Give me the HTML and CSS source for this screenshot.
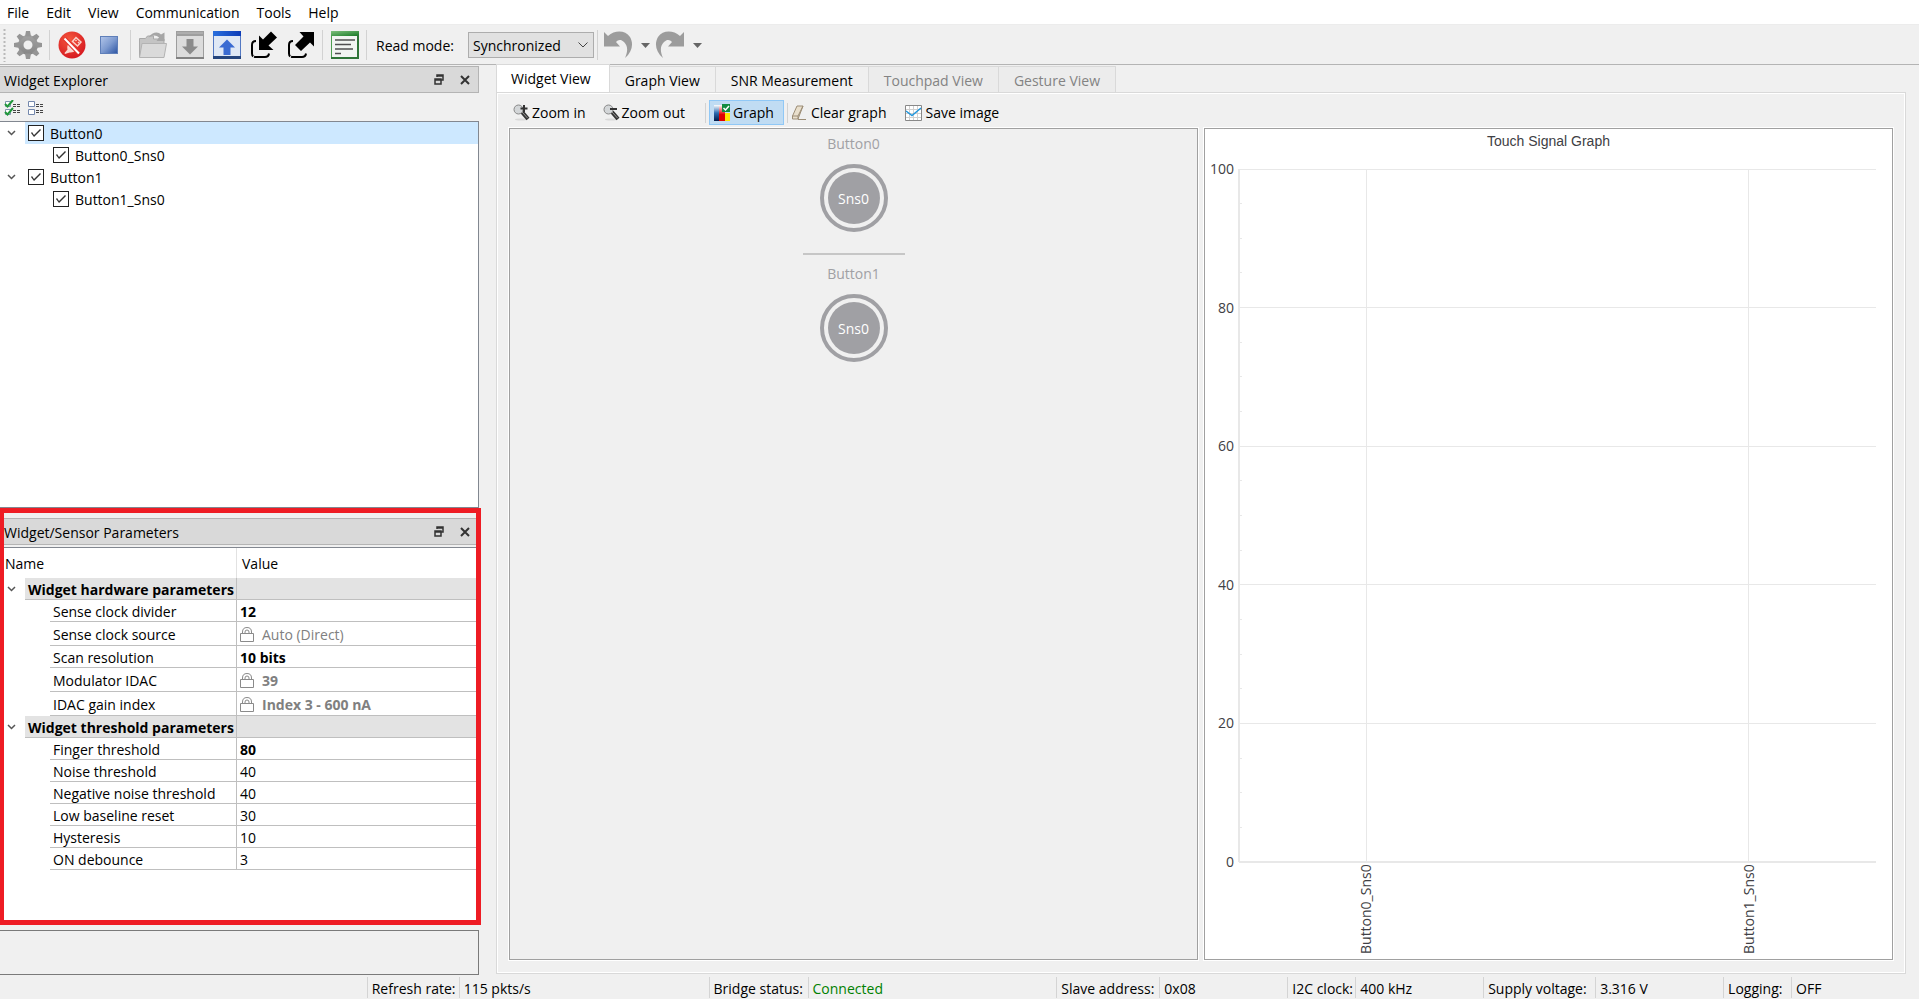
FILE: index.html
```html
<!DOCTYPE html>
<html lang="en">
<head>
<meta charset="utf-8">
<title>Tuner</title>
<link rel="stylesheet" href="styles.css">
</head>
<body>
<nav class="menubar">
  <button>File</button><button>Edit</button><button>View</button><button>Communication</button><button>Tools</button><button>Help</button>
</nav>

<div class="toolbar">
  <svg class="grip" width="3" height="34" viewBox="0 0 3 34"><path d="M1.5 1v33" stroke="#b9b9b9" stroke-width="2" stroke-dasharray="2 2"/></svg>
  <button class="tool" aria-label="Settings"><svg width="30" height="30" viewBox="0 0 30 30"><defs><linearGradient id="gear" x1="0" y1="0" x2="0" y2="1"><stop offset="0" stop-color="#a3a3a3"/><stop offset="1" stop-color="#858585"/></linearGradient></defs><g fill="url(#gear)"><path fill-rule="evenodd" d="M15 5a10 10 0 1 0 0 20a10 10 0 1 0 0-20zM15 10.500a4.500 4.500 0 1 1 0 9a4.500 4.500 0 1 1 0-9z"/></g><g fill="#959595"><path id="tooth" d="M12 6.500L13 1h4l1 5.500z"/><use href="#tooth" transform="rotate(45 15 15)"/><use href="#tooth" transform="rotate(90 15 15)"/><use href="#tooth" transform="rotate(135 15 15)"/><use href="#tooth" transform="rotate(180 15 15)"/><use href="#tooth" transform="rotate(225 15 15)"/><use href="#tooth" transform="rotate(270 15 15)"/><use href="#tooth" transform="rotate(315 15 15)"/></g></svg></button>
  <span class="sep"></span>
  <button class="tool" aria-label="Disconnect"><svg width="28" height="28" viewBox="0 0 28 28"><defs><radialGradient id="red" cx=".4" cy=".3" r=".8"><stop offset="0" stop-color="#f4573c"/><stop offset="1" stop-color="#d3121d"/></radialGradient></defs><circle cx="14" cy="14" r="13.500" fill="url(#red)"/><g fill="none" stroke="#fbd0c8" stroke-width="1.500"><path d="M14.500 10.500l3.500-4 5 4.500-3.500 4z"/><path d="M17.500 9l1 1M20 11l1 1"/></g><path d="M11 12l7 7q-3 3-6.500 2.500L7 23l-.5-1 3-3.500Q8.500 15 11 12z" fill="#fbd6ce"/><path d="M6.500 7.500L21 22.500" stroke="#e2302a" stroke-width="4"/><path d="M6.500 7.500L21 22.500" stroke="#fff" stroke-width="2"/></svg></button>
  <button class="tool" aria-label="Stop"><svg width="18" height="18" viewBox="0 0 18 18"><defs><linearGradient id="stop" x1="0" y1="0" x2="1" y2="1"><stop offset="0" stop-color="#b3c6ea"/><stop offset=".5" stop-color="#7e9bd0"/><stop offset="1" stop-color="#2c54a3"/></linearGradient></defs><rect x=".5" y=".5" width="17" height="17" fill="url(#stop)" stroke="#5f7fb9"/></svg></button>
  <span class="sep"></span>
  <button class="tool" aria-label="Open"><svg width="30" height="28" viewBox="0 0 30 28"><path d="M1.500 26V7.500h6l2-2.500h6v3h10.500v5" fill="#c4c4c4" stroke="#a9a9a9"/><path d="M1.500 26.500L4 12.500h24.500L26 26.500z" fill="#dadada" stroke="#b3b3b3"/><path d="M10.500 6.500C14 1 20 0 23 3.500l3.500-2V10h-8L21 6.500q-4-4-10.500 0z" fill="#a6a6a6"/></svg></button>
  <button class="tool" aria-label="Import"><svg width="28" height="28" viewBox="0 0 28 28"><rect x=".5" y=".5" width="27" height="27" fill="#dcdcdc" stroke="#9d9d9d"/><path d="M0 0h28v5H0z" fill="#9e9e9e"/><path d="M1 2h26" stroke="#bdbdbd"/><path d="M0 27h28" stroke="#828282" stroke-width="2"/><path d="M10.500 8h7v7.500H22l-8 8-8-8h4.500z" fill="#8b8b8b"/></svg></button>
  <button class="tool" aria-label="Export"><svg width="28" height="28" viewBox="0 0 28 28"><defs><linearGradient id="blue" x1="0" x2="1"><stop offset="0" stop-color="#2b70dd"/><stop offset="1" stop-color="#0b3bb8"/></linearGradient></defs><rect x=".5" y=".5" width="27" height="27" fill="#dfe8f5" stroke="#5378c2"/><path d="M0 0h28v5H0z" fill="url(#blue)"/><path d="M0 26.500h28" stroke="#25457d" stroke-width="3"/><path d="M10.500 24v-7.500H6l8-8 8 8h-4.500V24z" fill="#3a6bd2"/></svg></button>
  <button class="tool" aria-label="Read from device"><svg width="28" height="28" viewBox="0 0 28 28"><path d="M6 10Q2 10 2 14v8.500Q2 26 6 26h9q3.500 0 4-3.500" fill="none" stroke="#000" stroke-width="2" stroke-dasharray="18 1 20 1"/><path d="M21 .5L27 6.500 18.500 14.500l5 4.500H9V4.500l4 4z"/></svg></button>
  <button class="tool" aria-label="Write to device"><svg width="28" height="28" viewBox="0 0 28 28"><path d="M6 10Q2 10 2 14v8.500Q2 26 6 26h9q3.500 0 4-3.500" fill="none" stroke="#000" stroke-width="2" stroke-dasharray="18 1 20 1"/><path d="M12.500 1H27v14.500l-4-4-9 8.500-6-6 8.500-8.500z"/></svg></button>
  <span class="sep"></span>
  <button class="tool" aria-label="Log"><svg width="28" height="28" viewBox="0 0 28 28"><defs><linearGradient id="green" x1="0" x2="1" y2="1"><stop offset="0" stop-color="#7ec07c"/><stop offset="1" stop-color="#177a25"/></linearGradient></defs><rect x=".5" y=".5" width="27" height="27" fill="#f2f5f2" stroke="#4e9d50"/><path d="M0 0h28v5H0z" fill="url(#green)"/><path d="M27 4v23H0" fill="none" stroke="#2f7538" stroke-width="2"/><path d="M4 9h20M4 13.500h16M4 18h18M4 22.500h6" stroke="#505050" stroke-width="1.500"/></svg></button>
  <span class="sep"></span>
  <label class="mode-label" for="mode">Read mode:</label>
  <div class="combo"><select id="mode"><option>Synchronized</option></select><svg width="10" height="6" viewBox="0 0 10 6"><path d="M.5.500L5 5 9.500.500" fill="none" stroke="#444"/></svg></div>
  <span class="sep"></span>
  <button class="tool arrow" aria-label="Undo"><svg width="30" height="28" viewBox="0 0 30 28"><path id="bend" d="M1 1l4 4C12-1 22-1 27 6c4 7 2 15-5 21 3-7 3-12-1-16-3-3-6-2.500-8 0l4 4.500H1z" fill="#9c9c9c"/></svg><svg width="9" height="5" viewBox="0 0 9 5"><path d="M0 0h9L4.500 5z" fill="#666"/></svg></button>
  <button class="tool arrow" aria-label="Redo"><svg width="30" height="28" viewBox="0 0 30 28"><use href="#bend" transform="matrix(-1 0 0 1 30 0)"/></svg><svg width="9" height="5" viewBox="0 0 9 5"><path d="M0 0h9L4.500 5z" fill="#666"/></svg></button>
</div>

<main class="workspace">
  <aside class="dock">
    <section class="explorer">
      <header class="dock-title"><h2>Widget Explorer</h2>
        <button aria-label="Float"><svg width="10" height="11" viewBox="0 0 10 11"><path d="M3 3V1h6v5H7M3 2h6M1 5h6v5H1zM1 6h6" fill="none" stroke="#333" stroke-width="1.500"/></svg></button>
        <button aria-label="Close"><svg width="10" height="10" viewBox="0 0 10 10"><path d="M1 1l8 8M9 1L1 9" stroke="#333" stroke-width="2"/></svg></button>
      </header>
      <div class="tree-tools">
        <button aria-label="Check all"><svg width="16" height="16" viewBox="0 0 16 16"><g fill="#fff" stroke="#8093ae"><path d="M1.500 1.500h5v5h-5zM1.500 9.500h5v5h-5z"/></g><path d="M9 4.500h3m1 0h3M9 6.500h3m1 0h3M9 12.500h3m1 0h3M9 10.500h3m1 0h3" stroke="#444"/><path d="M1 4l2.500 2.500L9 0M1 12l2.500 2.500L9 8" fill="none" stroke="#21983b" stroke-width="2"/></svg></button>
        <button aria-label="Uncheck all"><svg width="16" height="16" viewBox="0 0 16 16"><g fill="#fff" stroke="#7488ad"><path d="M.5 1.500h6v5h-6zM.5 9.500h6v5h-6z"/></g><path d="M8 4.500h3m1 0h3M8 6.500h3m1 0h3M8 12.500h3m1 0h3M8 10.500h3m1 0h3" stroke="#444"/></svg></button>
      </div>
      <ul class="tree">
        <li><div class="node"><svg class="chev" width="9" height="6" viewBox="0 0 9 6"><path d="M1 1l3.500 3.500L8 1" fill="none" stroke="#555" stroke-width="1.500"/></svg><label class="selected"><input type="checkbox" checked>Button0</label></div>
          <ul><li><label><input type="checkbox" checked>Button0_Sns0</label></li></ul></li>
        <li><div class="node"><svg class="chev" width="9" height="6" viewBox="0 0 9 6"><path d="M1 1l3.500 3.500L8 1" fill="none" stroke="#555" stroke-width="1.500"/></svg><label><input type="checkbox" checked>Button1</label></div>
          <ul><li><label><input type="checkbox" checked>Button1_Sns0</label></li></ul></li>
      </ul>
    </section>

    <section class="params">
      <header class="dock-title"><h2>Widget/Sensor Parameters</h2>
        <button aria-label="Float"><svg width="10" height="11" viewBox="0 0 10 11"><path d="M3 3V1h6v5H7M3 2h6M1 5h6v5H1zM1 6h6" fill="none" stroke="#333" stroke-width="1.500"/></svg></button>
        <button aria-label="Close"><svg width="10" height="10" viewBox="0 0 10 10"><path d="M1 1l8 8M9 1L1 9" stroke="#333" stroke-width="2"/></svg></button>
      </header>
      <div class="sheet">
      <table>
        <colgroup><col class="c-exp"><col class="c-exp"><col class="c-name"><col></colgroup>
        <thead><tr><th colspan="3">Name</th><th>Value</th></tr></thead>
        <tbody>
        <tr class="group"><td class="exp"><svg class="chev" width="9" height="6" viewBox="0 0 9 6"><path d="M1 1l3.500 3.500L8 1" fill="none" stroke="#555" stroke-width="1.500"/></svg></td><th colspan="2">Widget hardware parameters</th><td></td></tr>
        <tr><td colspan="2" class="blank"></td><td>Sense clock divider</td><td class="set">12</td></tr>
        <tr class="tall"><td colspan="2" class="blank"></td><td>Sense clock source</td><td class="locked"><svg width="14" height="15" viewBox="0 0 14 15"><path d="M2.500 6V5Q2.500.500 7 .500t4.500 4.500v1M5 6V5Q5 3 7 3t2 2v1M.5 6.500h13v8H.5z" fill="none" stroke="#8a8a8a"/></svg>Auto (Direct)</td></tr>
        <tr><td colspan="2" class="blank"></td><td>Scan resolution</td><td class="set">10 bits</td></tr>
        <tr class="tall"><td colspan="2" class="blank"></td><td>Modulator IDAC</td><td class="locked set"><svg width="14" height="15" viewBox="0 0 14 15"><path d="M2.500 6V5Q2.500.500 7 .500t4.500 4.500v1M5 6V5Q5 3 7 3t2 2v1M.5 6.500h13v8H.5z" fill="none" stroke="#8a8a8a"/></svg>39</td></tr>
        <tr class="tall"><td colspan="2" class="blank"></td><td>IDAC gain index</td><td class="locked set"><svg width="14" height="15" viewBox="0 0 14 15"><path d="M2.500 6V5Q2.500.500 7 .500t4.500 4.500v1M5 6V5Q5 3 7 3t2 2v1M.5 6.500h13v8H.5z" fill="none" stroke="#8a8a8a"/></svg>Index 3 - 600 nA</td></tr>
        </tbody>
        <tbody>
        <tr class="group"><td class="exp"><svg class="chev" width="9" height="6" viewBox="0 0 9 6"><path d="M1 1l3.500 3.500L8 1" fill="none" stroke="#555" stroke-width="1.500"/></svg></td><th colspan="2">Widget threshold parameters</th><td></td></tr>
        <tr><td colspan="2" class="blank"></td><td>Finger threshold</td><td class="set">80</td></tr>
        <tr><td colspan="2" class="blank"></td><td>Noise threshold</td><td>40</td></tr>
        <tr><td colspan="2" class="blank"></td><td>Negative noise threshold</td><td>40</td></tr>
        <tr><td colspan="2" class="blank"></td><td>Low baseline reset</td><td>30</td></tr>
        <tr><td colspan="2" class="blank"></td><td>Hysteresis</td><td>10</td></tr>
        <tr><td colspan="2" class="blank"></td><td>ON debounce</td><td>3</td></tr>
        </tbody>
      </table>
      </div>
    </section>
    <div class="description"></div>
  </aside>

  <section class="views">
    <div class="tabs" role="tablist">
      <button role="tab" class="active">Widget View</button><button role="tab">Graph View</button><button role="tab">SNR Measurement</button><button role="tab" disabled>Touchpad View</button><button role="tab" disabled>Gesture View</button>
    </div>
    <div class="pane">
      <div class="view-tools">
        <button><svg width="17" height="17" viewBox="0 0 17 17"><ellipse cx="8" cy="15.500" rx="6" ry="1" fill="#d8d8d8"/><path d="M9 8l6 7" stroke="#333" stroke-width="4"/><path d="M9 8l5.500 6" stroke="#999"/><circle cx="5.500" cy="5.500" r="4.500" fill="#d3d6d8" stroke="#888"/><path d="M11 1v7M7.500 4.500h7" stroke="#333" stroke-width="2"/></svg>Zoom in</button>
        <button><svg width="17" height="17" viewBox="0 0 17 17"><ellipse cx="8" cy="15.500" rx="6" ry="1" fill="#d8d8d8"/><path d="M9 8l6 7" stroke="#333" stroke-width="4"/><path d="M9 8l5.500 6" stroke="#999"/><circle cx="5.500" cy="5.500" r="4.500" fill="#d3d6d8" stroke="#888"/><path d="M7 5h7" stroke="#333" stroke-width="2"/></svg>Zoom out</button>
        <span class="sep"></span>
        <button class="pressed"><svg width="17" height="17" viewBox="0 0 17 17"><defs><linearGradient id="b1" x1="0" y1="0" x2="0" y2="1"><stop offset="0" stop-color="#fff"/><stop offset=".5" stop-color="#2d6bb0"/><stop offset="1" stop-color="#001b48"/></linearGradient><linearGradient id="b2" x1="0" y1="0" x2="0" y2="1"><stop offset="0" stop-color="#fff"/><stop offset=".6" stop-color="#e00000"/></linearGradient></defs><path d="M0 1h5v16H0z" fill="url(#b1)"/><path d="M5 1h6v16H5z" fill="url(#b2)"/><path d="M11 9h5v8h-5z" fill="#ffe600"/><path d="M8 0h8v8H8z" fill="#118c40"/><path d="M9.500 4l2 2L15 2" fill="none" stroke="#fff" stroke-width="1.500"/></svg>Graph</button>
        <span class="sep"></span>
        <button><svg width="17" height="16" viewBox="0 0 17 16"><path d="M6 1h6L7 14H1.500v-3z" fill="#e9dfcc" stroke="#9c8d76"/><path d="M1.500 11H7l5-10M7 14.500h8M7 11v3" fill="none" stroke="#9c8d76"/></svg>Clear graph</button>
        <button><svg width="17" height="16" viewBox="0 0 17 16"><path d="M.5.500h16v15H.500z" fill="#fff" stroke="#888"/><path d="M4.500 1v14M8.500 1v14M12.500 1v14M1 4.500h15M1 8.500h15M1 12.500h15" stroke="#d0d0d0"/><path d="M1 6l6 4.500L16 3" fill="none" stroke="#2196dc" stroke-width="1.500"/></svg>Save image</button>
      </div>
      <div class="split">
        <div class="canvas">
          <figure class="widget"><figcaption>Button0</figcaption><div class="sensor"><span>Sns0</span></div></figure>
          <hr>
          <figure class="widget"><figcaption>Button1</figcaption><div class="sensor"><span>Sns0</span></div></figure>
        </div>
        <div class="chart">
          <h3>Touch Signal Graph</h3>
          <div class="y-axis"><span>100</span><span>80</span><span>60</span><span>40</span><span>20</span><span>0</span></div>
          <svg class="plot"><g stroke="#e8e8e8" shape-rendering="crispEdges"><line x1="0" x2="100%" y1="0" y2="0"/><line x1="0" x2="100%" y1="20%" y2="20%"/><line x1="0" x2="100%" y1="40%" y2="40%"/><line x1="0" x2="100%" y1="60%" y2="60%"/><line x1="0" x2="100%" y1="80%" y2="80%"/><line x1="20%" x2="20%" y1="0" y2="100%"/><line x1="80%" x2="80%" y1="0" y2="100%"/><line x1="0" x2="3" y1="5%" y2="5%"/><line x1="0" x2="3" y1="10%" y2="10%"/><line x1="0" x2="3" y1="15%" y2="15%"/><line x1="0" x2="3" y1="25%" y2="25%"/><line x1="0" x2="3" y1="30%" y2="30%"/><line x1="0" x2="3" y1="35%" y2="35%"/><line x1="0" x2="3" y1="45%" y2="45%"/><line x1="0" x2="3" y1="50%" y2="50%"/><line x1="0" x2="3" y1="55%" y2="55%"/><line x1="0" x2="3" y1="65%" y2="65%"/><line x1="0" x2="3" y1="70%" y2="70%"/><line x1="0" x2="3" y1="75%" y2="75%"/><line x1="0" x2="3" y1="85%" y2="85%"/><line x1="0" x2="3" y1="90%" y2="90%"/><line x1="0" x2="3" y1="95%" y2="95%"/><line x1="0" x2="0" y1="0" y2="100%" stroke-width="2"/><line x1="0" x2="100%" y1="100%" y2="100%" stroke-width="2"/></g></svg>
          <div class="x-axis"><span>Button0_Sns0</span><span>Button1_Sns0</span></div>
        </div>
      </div>
    </div>
  </section>
</main>

<footer class="status">
  <span class="spacer"></span>
  <span>Refresh rate:</span><span>115 pkts/s</span>
  <span>Bridge status:</span><span class="ok">Connected</span>
  <span>Slave address:</span><span>0x08</span>
  <span>I2C clock:</span><span>400 kHz</span>
  <span>Supply voltage:</span><span>3.316 V</span>
  <span>Logging:</span><span>OFF</span>
</footer>
</body>
</html>
```
FILE: styles.css
```css
* { box-sizing: border-box; }
body {
  margin: 0;
  height: 100vh;
  display: flex;
  flex-direction: column;
  background: #f0f0f0;
  color: #000;
  font: 14px/20px "Open Sans", sans-serif;
  overflow: hidden;
}
button, select { font: inherit; color: inherit; background: none; border: 0; padding: 0; margin: 0; }
svg { flex: none; }
h2, h3, ul, figure { margin: 0; padding: 0; font: inherit; list-style: none; }

.menubar { display: flex; flex: none; gap: 17px; height: 25px; padding: 2px 7px 0; background: #fff; border-bottom: 1px solid #ececec; }

.toolbar { display: flex; flex: none; align-items: center; height: 40px; padding: 1px 3px 0; border-bottom: 1px solid #b4b4b4; }
.tool { display: flex; align-items: center; justify-content: center; width: 37px; height: 34px; }
.tool.arrow { width: 52px; gap: 8px; }
.grip { margin-right: 3px; }
.sep { flex: none; width: 1px; height: 30px; margin: 0 3px; background: #d2d2d2; }
.mode-label { margin: 0 14px 0 6px; padding-top: 1px; }
.combo { position: relative; height: 26px; width: 126px; }
.combo select { width: 100%; height: 100%; padding: 1px 4px 0; appearance: none; background: #e1e1e1; border: 1px solid #adadad; border-radius: 0; }
.combo svg { position: absolute; right: 6px; top: 10px; }

.workspace { display: flex; flex: 1; min-height: 0; gap: 17px; padding-right: 13px; }
.dock { display: flex; flex-direction: column; flex: none; width: 479px; padding-top: 1px; }
.explorer { display: flex; flex-direction: column; flex: 1; min-height: 0; }
.dock-title { display: flex; flex: none; align-items: center; gap: 16px; height: 27px; padding: 0 8px 0 4px; background: #d9d9d9; border: 1px solid #b4b4b4; border-left: 0; }
.dock-title h2 { flex: 1; padding-top: 2px; }
.dock-title button { display: flex; }
.tree-tools { display: flex; align-items: center; gap: 8px; height: 28px; padding-left: 4px; padding-top: 2px; }
.tree-tools button { display: flex; }
.tree { flex: 1; background: #fff; border: 1px solid #828790; border-left: 0; }
.node { display: flex; align-items: center; }
.chev { display: block; margin-left: 7px; margin-right: 9px; }
.tree label { display: flex; flex: 1; align-items: flex-end; gap: 6px; height: 22px; padding-left: 3px; }
.tree ul { padding-left: 50px; }
.tree .selected { background: #cde8ff; }
.tree input { appearance: none; width: 16px; height: 16px; margin: 0 0 3px; border: 1px solid #222; background: #fff; }
.tree input:checked::after { content: ""; display: block; width: 14px; height: 14px; background: #333; clip-path: polygon(2px 7px, 3px 6px, 5px 9px, 11px 3px, 12px 4px, 5px 11px); }

.params { position: relative; flex: none; padding-top: 10px; }
.params::after { content: ""; position: absolute; inset: 0 -2px 0 0; border: 5px solid #ee1c24; border-left-width: 4px; pointer-events: none; }
.sheet { margin-top: 2px; padding-bottom: 55px; background: #fff; border-top: 1px solid #828790; }
table { width: 100%; border-collapse: separate; border-spacing: 0; table-layout: fixed; }
.c-exp { width: 25px; }
.c-name { width: 187px; }
th { text-align: left; }
thead th { height: 30px; padding: 2px 5px 0; font-weight: 400; }
thead th:first-child { border-right: 1px solid #e2e2e2; }
tbody td, tbody th { height: 22px; padding: 3px 3px 0; line-height: 18px; border-bottom: 1px solid #bfbfbf; white-space: nowrap; }
tbody td:nth-last-child(2), tbody th { border-right: 1px solid #bfbfbf; }
.tall td { height: 24px; }
tbody .blank, tbody .exp { padding: 0; border: 0; }
.group th, .group td:last-child { background: #e3e3e3; }
.set { font-weight: 700; }
.locked { color: #808080; }
.locked svg { margin-right: 8px; vertical-align: -2px; }
.description { flex: none; height: 45px; margin: 5px 0 1px; border: 1px solid #7a7a7a; border-left: 0; }

.views { display: flex; flex-direction: column; flex: 1; min-width: 0; padding-bottom: 2px; }
.tabs { display: flex; align-items: flex-end; height: 27px; }
.tabs button { height: 26px; padding: 2px 15px 0; background: #f0f0f0; border: 1px solid #d9d9d9; border-left: 0; border-bottom: 0; }
.tabs button.active { height: 28px; padding: 1px 18px 0 14px; background: #fff; border-left: 1px solid #d9d9d9; }
.tabs button:disabled { color: #838383; background: #ececec; }
.pane { display: flex; flex-direction: column; flex: 1; min-height: 0; padding: 0 12px 13px; border: 1px solid #d9d9d9; box-shadow: inset 0 0 0 1px #fff; }
.view-tools { display: flex; flex: none; align-items: center; height: 35px; padding: 4px 4px 0; }
.view-tools button { display: flex; align-items: center; gap: 2px; height: 25px; margin-right: 17px; }
.view-tools .sep { height: 20px; }
.view-tools .pressed { padding: 0 9px 0 4px; margin: 0; background: #c0dcf3; border: 1px solid #90c8f6; }
.view-tools .pressed ~ button:not(.pressed) { gap: 3px; margin-right: 19px; }
.split { display: grid; grid-template-columns: minmax(0, 1fr) minmax(0, 1fr); flex: 1; gap: 6px; min-height: 0; }
.canvas, .chart { border: 1px solid #a0a0a0; outline: 1px solid #fff; }
.canvas { display: flex; flex-direction: column; align-items: center; padding-top: 5px; color: #a0a0a4; }
.canvas hr { width: 102px; height: 2px; margin: 21px 0 9px; border: 0; background: #c6c6c6; }
.widget { display: flex; flex-direction: column; align-items: center; gap: 10px; }
.sensor { display: flex; width: 68px; height: 68px; padding: 4px; border: 4px solid #a0a0a4; border-radius: 50%; }
.sensor span { display: flex; flex: 1; align-items: center; justify-content: center; padding-top: 2px; background: #a0a0a4; border-radius: 50%; color: #fff; }

.chart { display: grid; grid-template: 40px 1fr 97px / 34px 1fr; padding-right: 16px; background: #fff; color: #404044; }
.chart h3 { grid-column: 1 / -1; padding-left: 16px; text-align: center; font: 14px/24px "Liberation Sans", sans-serif; }
.y-axis { display: flex; flex-direction: column; justify-content: space-between; padding-right: 5px; text-align: right; }
.y-axis span { height: 0; line-height: 0; }
.plot { width: 100%; height: 100%; overflow: visible; }
.x-axis { grid-column: 2; display: grid; grid-template-columns: 2fr 2fr; column-gap: 20%; justify-items: center; padding-top: 4px; }
.x-axis span { height: 88px; writing-mode: vertical-rl; transform: rotate(180deg); text-align: right; }

.status { display: grid; flex: none; grid-template-columns: 367fr 92px 250fr 99px 249fr 103px 128fr 68px 128fr 112px 128fr 68px 128fr; height: 23px; padding-top: 1px; }
.status span { padding: 2px 0 0 4px; line-height: 20px; height: 21px; border-left: 1px solid #d4d4d4; white-space: nowrap; }
.status .spacer { border: 0; }
.status .ok { color: #008000; }
```
